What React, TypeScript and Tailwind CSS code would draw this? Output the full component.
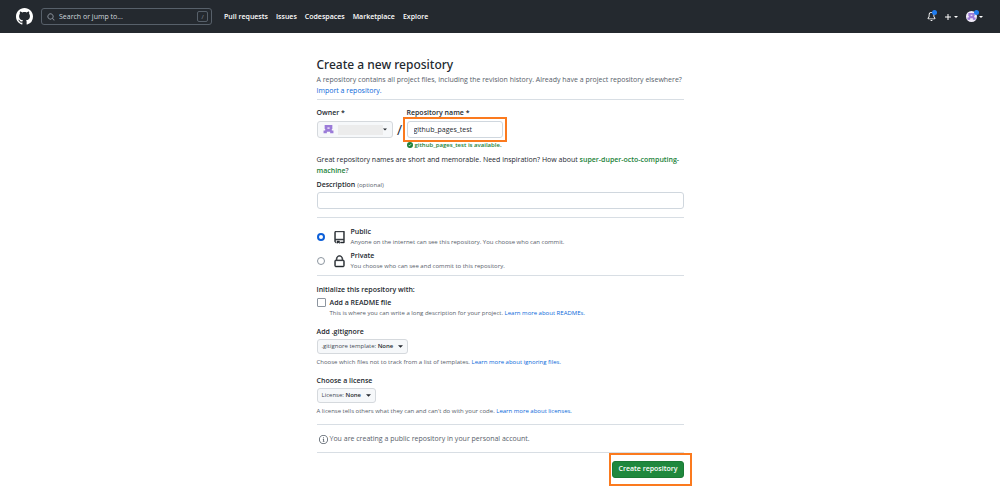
import React from "react";

const Caret = ({ size = "h-[3px] w-[5px]", className = "" }: { size?: string; className?: string }) => (
  <svg viewBox="0 0 8 4" className={`shrink-0 fill-current ${size} ${className}`} aria-hidden="true">
    <path d="M0 0h8L4 4z" />
  </svg>
);

const GitHubMark = () => (
  <svg viewBox="0 0 16 16" className="size-[17px] fill-white" aria-hidden="true">
    <path d="M8 0C3.58 0 0 3.58 0 8c0 3.54 2.29 6.53 5.47 7.59.4.07.55-.17.55-.38 0-.19-.01-.82-.01-1.49-2.01.37-2.53-.49-2.69-.94-.09-.23-.48-.94-.82-1.13-.28-.15-.68-.52-.01-.53.63-.01 1.08.58 1.23.82.72 1.21 1.87.87 2.33.66.07-.52.28-.87.51-1.07-1.78-.2-3.64-.89-3.64-3.95 0-.87.31-1.59.82-2.15-.08-.2-.36-1.02.08-2.12 0 0 .67-.21 2.2.82.64-.18 1.32-.27 2-.27s1.36.09 2 .27c1.53-1.04 2.2-.82 2.2-.82.44 1.1.16 1.92.08 2.12.51.56.82 1.27.82 2.15 0 3.07-1.87 3.75-3.65 3.95.29.25.54.73.54 1.48 0 1.07-.01 1.93-.01 2.2 0 .21.15.46.55.38A8.01 8.01 0 0 0 16 8c0-4.42-3.58-8-8-8z" />
  </svg>
);

const Identicon = ({ className }: { className: string }) => (
  <svg viewBox="0 0 10 10" className={className} aria-hidden="true">
    <path fill="#9b7bd8" d="M1.500 1h7v3.500H8V6h1.500v2.500h-3V7h-3v1.500h-3V6H2V4.500h-.5z" />
    <path fill="#e4daf5" d="M4 3h2v1.500H4z" />
  </svg>
);

const navItems = ["Pull requests", "Issues", "Codespaces", "Marketplace", "Explore"];

function Header() {
  return (
    <header className="flex h-[33px] items-center bg-[#24292f] pr-[17px] pl-4 text-white">
      <a href="#home" aria-label="Homepage">
        <GitHubMark />
      </a>
      <div className="ml-2 flex h-[17px] w-[171px] items-center rounded-[3px] border border-[#57606a] pr-[3px] pl-[5px]">
        <svg viewBox="0 0 16 16" className="size-2 shrink-0 fill-[#8b949e]" aria-hidden="true">
          <path d="M10.68 11.74a6 6 0 0 1-7.922-8.982 6 6 0 0 1 8.982 7.922l3.04 3.04a.749.749 0 1 1-1.06 1.06ZM11.5 7a4.499 4.499 0 1 0-8.997 0A4.499 4.499 0 0 0 11.5 7Z" />
        </svg>
        <input
          type="text"
          aria-label="Search or jump to"
          placeholder="Search or jump to..."
          className="ml-1 min-w-0 flex-1 bg-transparent text-[7px] leading-[10px] outline-none placeholder:text-[#d0d7de]"
        />
        <span className="flex h-[11px] w-[11px] items-center justify-center rounded-[2px] border border-[#57606a] text-[6px] leading-none text-[#8b949e]">
          /
        </span>
      </div>
      <nav className="ml-3 flex gap-2 text-[7px] leading-[10px] font-semibold">
        {navItems.map((item) => (
          <a key={item} href="#nav">
            {item}
          </a>
        ))}
      </nav>
      <div className="ml-auto flex items-center">
        <button type="button" aria-label="Notifications" className="relative">
          <svg viewBox="0 0 16 16" className="size-[9px] fill-white" aria-hidden="true">
            <path d="M8 16a2 2 0 0 0 1.985-1.75c.017-.137-.097-.25-.235-.25h-3.5c-.138 0-.252.113-.235.25A2 2 0 0 0 8 16ZM3 5a5 5 0 0 1 10 0v2.947c0 .05.015.098.042.139l1.703 2.555A1.519 1.519 0 0 1 13.482 13H2.518a1.516 1.516 0 0 1-1.263-2.36l1.703-2.554A.255.255 0 0 0 3 7.947Zm5-3.5A3.5 3.5 0 0 0 4.5 5v2.947c0 .346-.102.683-.294.97l-1.703 2.556a.017.017 0 0 0-.003.01l.001.006.004.006.006.004.007.001h10.964l.007-.001.006-.004.004-.006.001-.007a.017.017 0 0 0-.003-.01l-1.703-2.554a1.745 1.745 0 0 1-.294-.97V5A3.5 3.5 0 0 0 8 1.5Z" />
          </svg>
          <span className="absolute -top-0.5 -right-px size-[5px] rounded-full bg-[#1f7cf0]" />
        </button>
        <button type="button" aria-label="Create new" className="ml-2 flex items-center gap-0.5">
          <svg viewBox="0 0 8 8" className="size-2 fill-white" aria-hidden="true">
            <path d="M3.500 1h1v2.500H7v1H4.500V7h-1V4.500H1v-1h2.500z" />
          </svg>
          <Caret size="h-0.5 w-1" />
        </button>
        <button type="button" aria-label="Account" className="relative ml-2 flex items-center gap-0.5">
          <span className="flex size-[11px] items-center justify-center rounded-full bg-[#f0ebf8]">
            <Identicon className="size-[9px]" />
          </span>
          <Caret size="h-0.5 w-1" />
          <span className="absolute -top-px left-2 size-[5px] rounded-full bg-[#1f7cf0]" />
        </button>
      </div>
    </header>
  );
}

const Divider = ({ className }: { className: string }) => <hr className={`border-[#d8dee4] ${className}`} />;

const Highlight = ({ className }: { className: string }) => (
  <span className={`pointer-events-none absolute border-2 border-[#fb7a1e] ${className}`} />
);

const LearnMore = ({ children }: { children: React.ReactNode }) => (
  <a href="#docs" className="text-[#0969da]">
    {children}
  </a>
);

function Visibility({
  id,
  label,
  note,
  checked,
  children,
}: {
  id: string;
  label: string;
  note: string;
  checked?: boolean;
  children: React.ReactNode;
}) {
  return (
    <div className="flex items-center">
      <input
        type="radio"
        name="visibility"
        id={id}
        defaultChecked={checked}
        className="size-2 shrink-0 appearance-none rounded-full border border-[#8c959f] bg-white checked:border-2 checked:border-[#0c5fd8]"
      />
      <svg viewBox="0 0 24 24" className="ml-2 size-[13px] shrink-0 fill-[#24292f]" aria-hidden="true">
        {children}
      </svg>
      <label htmlFor={id} className="ml-[5px] block leading-[10px]">
        <span className="block font-semibold">{label}</span>
        <span className="block text-[6px] text-[#57606a]">{note}</span>
      </label>
    </div>
  );
}

function TemplateMenu({ title, prefix, note, link }: { title: string; prefix: string; note: string; link: string }) {
  return (
    <section>
      <h2 className="leading-[10px] font-semibold">{title}</h2>
      <button
        type="button"
        aria-haspopup="menu"
        className="mt-0.5 flex h-[15px] items-center rounded-[3px] border border-[#d5d9dd] bg-[#f6f8fa] px-1 text-[6px]"
      >
        <span className="text-[#424a53]">{prefix}&nbsp;</span>
        <span className="font-semibold">None</span>
        <Caret className="ml-[5px]" />
      </button>
      <p className="mt-[3px] text-[6px] leading-[10px] text-[#57606a]">
        {note} <LearnMore>{link}</LearnMore>
      </p>
    </section>
  );
}

export default function App() {
  return (
    <div className="min-h-screen bg-white font-['Open_Sans','Noto_Sans',sans-serif] text-[7px] text-[#24292f]">
      <Header />
      <main className="mx-auto max-w-[367px] pt-6 pb-2">
        <h1 className="font-['Noto_Sans','Open_Sans',sans-serif] text-[12px] leading-4 font-medium">
          Create a new repository
        </h1>
        <p className="mt-px leading-[11px] text-[#57606a]">
          A repository contains all project files, including the revision history. Already have a project repository
          elsewhere? <LearnMore>Import a repository.</LearnMore>
        </p>
        <Divider className="mt-[3px]" />

        <form onSubmit={(e) => e.preventDefault()}>
          <div className="mt-2 flex items-end">
            <div>
              <label htmlFor="owner" className="block leading-[10px] font-semibold">
                Owner *
              </label>
              <button
                type="button"
                id="owner"
                aria-haspopup="menu"
                className="mt-[3px] flex h-[17px] w-[76px] items-center rounded-[3px] border border-[#d5d9dd] bg-[#f6f8fa] px-[5px]"
              >
                <Identicon className="size-[11px] shrink-0" />
                <span className="ml-1 h-[10px] w-[46px] bg-[#ececec]" />
                <Caret size="h-[3px] w-1" />
              </button>
            </div>
            <span className="w-[14px] text-center text-[14px] leading-[17px]">/</span>
            <div>
              <label htmlFor="repo" className="block leading-[10px] font-semibold">
                Repository name *
              </label>
              <div className="relative mt-[3px]">
                <input
                  id="repo"
                  type="text"
                  defaultValue="github_pages_test"
                  className="block h-[17px] w-24 rounded-[3px] border border-[#d0d7de] bg-white px-[6px] outline-none"
                />
                <Highlight className="-inset-1" />
              </div>
            </div>
          </div>
          <p className="mt-0.5 ml-[90px] flex items-center gap-0.5 text-[6px] leading-[10px] font-semibold text-[#1a7f37]">
            <svg viewBox="0 0 16 16" className="size-[6px] shrink-0 fill-current" aria-hidden="true">
              <path d="M8 16A8 8 0 1 1 8 0a8 8 0 0 1 0 16Zm3.780-9.720a.75.75 0 0 0-1.060-1.060L6.750 9.190 5.280 7.720a.75.75 0 0 0-1.060 1.060l2 2a.75.75 0 0 0 1.060 0Z" />
            </svg>
            github_pages_test is available.
          </p>
          <p className="mt-1 leading-[11px]">
            Great repository names are short and memorable. Need inspiration? How about{" "}
            <strong className="font-semibold text-[#1a7f37]">super-duper-octo-computing-machine</strong>?
          </p>
          <label htmlFor="description" className="mt-1 block leading-[10px] font-semibold">
            Description <span className="text-[6px] font-normal text-[#57606a]">(optional)</span>
          </label>
          <input
            id="description"
            type="text"
            className="mt-0.5 block h-[17px] w-full rounded-[3px] border border-[#d0d7de] bg-white px-[6px] outline-none"
          />
          <Divider className="mt-2" />

          <div className="mt-[9px] flex flex-col gap-1">
            <Visibility
              id="public"
              label="Public"
              note="Anyone on the internet can see this repository. You choose who can commit."
              checked
            >
              <path d="M3 2.750A2.750 2.750 0 0 1 5.750 0h14.500a.75.75 0 0 1 .750.750v20.500a.75.75 0 0 1-.750.750h-6a.75.75 0 0 1 0-1.500h5.250v-4H6A1.500 1.500 0 0 0 4.500 18v.750c0 .716.430 1.334 1.050 1.605a.75.75 0 0 1-.6 1.374A3.250 3.250 0 0 1 3 18.750ZM19.500 1.500H5.750c-.69 0-1.250.56-1.250 1.250v12.651A2.989 2.989 0 0 1 6 15h13.500Z" stroke="#24292f" />
              <path d="M7 18.250a.25.25 0 0 1 .250-.250h5a.25.25 0 0 1 .250.250v5.010a.25.25 0 0 1-.397.201l-2.206-1.604a.25.25 0 0 0-.294 0L7.397 23.460a.25.25 0 0 1-.397-.2Z" />
            </Visibility>
            <Visibility id="private" label="Private" note="You choose who can see and commit to this repository.">
              <path d="M6 9V7.250C6 3.845 8.503 1 12 1s6 2.845 6 6.250V9h.5a2.500 2.500 0 0 1 2.500 2.500v8a2.500 2.500 0 0 1-2.500 2.500h-13A2.500 2.500 0 0 1 3 19.500v-8A2.500 2.500 0 0 1 5.500 9Zm-1.500 2.500v8a1 1 0 0 0 1 1h13a1 1 0 0 0 1-1v-8a1 1 0 0 0-1-1h-13a1 1 0 0 0-1 1Zm3-4.250V9h9V7.250c0-2.670-1.922-4.750-4.500-4.750-2.578 0-4.500 2.080-4.500 4.750Z" stroke="#24292f" />
            </Visibility>
          </div>
          <Divider className="mt-1" />

          <h2 className="mt-[9px] leading-[10px] font-semibold">Initialize this repository with:</h2>
          <div className="mt-[3px] flex items-start">
            <input
              id="readme"
              type="checkbox"
              className="size-[9px] shrink-0 appearance-none rounded-[1px] border border-[#8c959f] bg-white checked:bg-[#0969da]"
            />
            <div className="ml-1">
              <label htmlFor="readme" className="block leading-[10px] font-semibold">
                Add a README file
              </label>
              <p className="text-[6px] leading-[10px] text-[#57606a]">
                This is where you can write a long description for your project.{" "}
                <LearnMore>Learn more about READMEs.</LearnMore>
              </p>
            </div>
          </div>
          <div className="mt-[9px] flex flex-col gap-[9px]">
            <TemplateMenu
              title="Add .gitignore"
              prefix=".gitignore template:"
              note="Choose which files not to track from a list of templates."
              link="Learn more about ignoring files."
            />
            <TemplateMenu
              title="Choose a license"
              prefix="License:"
              note="A license tells others what they can and can't do with your code."
              link="Learn more about licenses."
            />
          </div>
          <Divider className="mt-2" />

          <p className="mt-[9px] flex items-center gap-0.5 pl-0.5 leading-[10px] text-[#57606a]">
            <svg viewBox="0 0 16 16" className="size-[9px] shrink-0 fill-current" aria-hidden="true">
              <path d="M0 8a8 8 0 1 1 16 0A8 8 0 0 1 0 8Zm8-6.500a6.500 6.500 0 1 0 0 13 6.500 6.500 0 0 0 0-13ZM6.500 7.750A.75.75 0 0 1 7.250 7h1a.75.75 0 0 1 .750.750v2.750h.250a.75.75 0 0 1 0 1.500h-2a.75.75 0 0 1 0-1.500h.250v-2h-.250a.75.75 0 0 1-.750-.750ZM8 6a1 1 0 1 1 0-2 1 1 0 0 1 0 2Z" />
            </svg>
            You are creating a public repository in your personal account.
          </p>
          <Divider className="mt-2" />

          <div className="mt-2 flex justify-end">
            <div className="relative">
              <button
                type="submit"
                className="block h-[17px] rounded-[3px] border border-[#1b7a35] bg-[#1f883d] px-[5px] font-semibold text-white"
              >
                Create repository
              </button>
              <Highlight className="-inset-y-2 -right-2 -left-[3px]" />
            </div>
          </div>
        </form>
      </main>
    </div>
  );
}
